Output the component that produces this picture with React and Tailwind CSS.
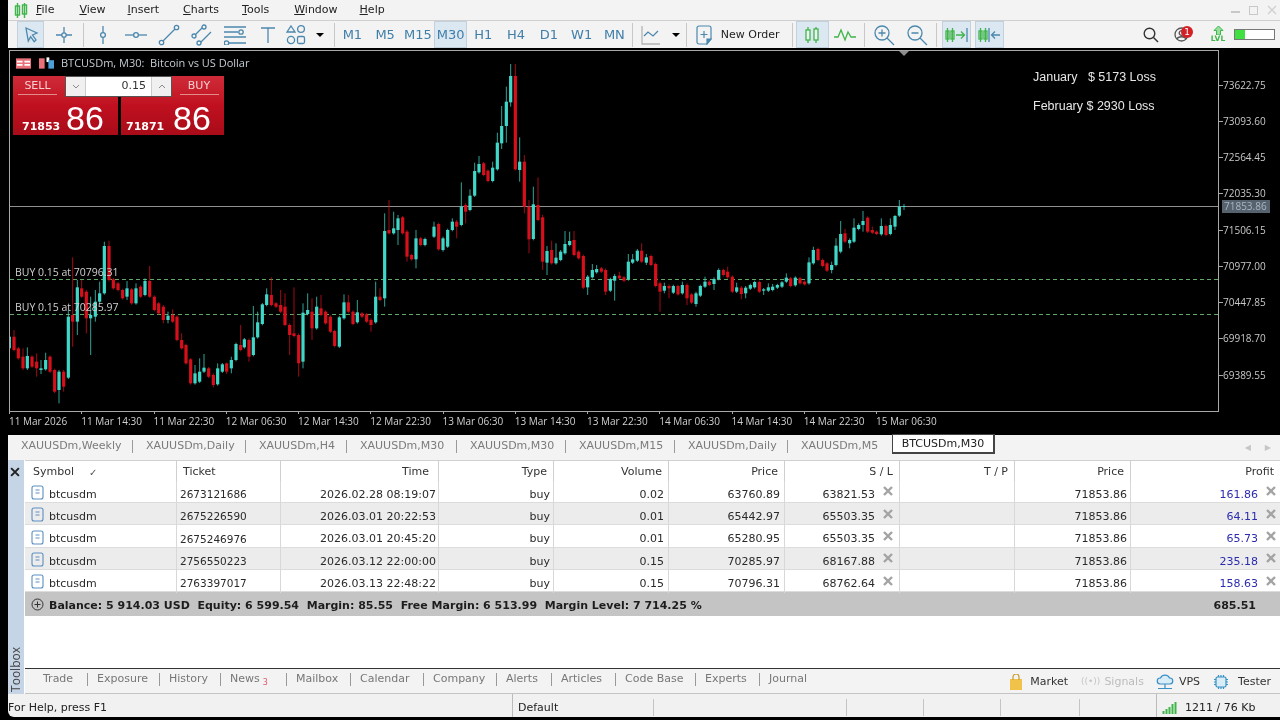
import React from "react";

const T = "#3fd8c8", R = "#d60f1b";
const z4 = [[28,"t",410,445],[42,"r",410,450,390],[55,"r",445,475],[69,"r",470,505,445,510],[82,"t",468,505,442,510],[96,"r",470,500],[110,"r",485,505,460,530],[123,"t",505,510,480,522],[137,"t",480,508,458],[150,"r",470,515],[164,"r",510,575],[177,"t",515,570,510,610],[191,"r",515,560,510,575],[205,"t",350,533,330],[218,"r",345,365,172,440],[232,"t",262,365,240,405],[245,"r",265,290,240],[259,"r",275,355,270,400],[272,"t",345,355,290,465],[286,"t",305,350,270,365],[299,"t",280,305,245],[313,"t",138,280,125],[327,"r",138,240,122],[340,"r",238,265],[354,"r",250,270],[368,"r",270,295],[381,"t",265,290,243,300],[395,"r",268,310],[408,"t",265,310,250],[422,"r",260,290],[435,"t",243,285,235],[449,"r",243,290,198],[463,"r",290,330],[476,"r",310,340],[490,"r",320,360,315,370],[504,"t",347,360,335,370],[518,"r",345,365,328],[531,"r",350,420],[545,"r",420,445,400],[558,"r",435,490],[572,"r",478,550],[585,"t",520,550,495],[599,"t",515,545,475],[612,"t",503,515,462],[626,"r",505,530],[640,"r",525,555,520,562],[653,"t",505,553,490],[667,"t",493,515],[680,"r",490,515,488,522],[694,"t",480,505,470,520],[708,"t",432,480,428],[722,"r",435,450,375],[733,"t",418,442],[747,"r",420,470,415,485],[760,"t",412,465,318],[773,"t",367,412,335],[787,"t",313,372],[800,"t",283,315,265],[814,"r",285,315,232],[828,"r",310,320],[842,"r",315,335,270],[855,"r",320,375,280],[869,"r",375,405,370,465],[882,"r",400,408,262],[896,"r",405,490,400,530],[909,"t",338,485,310,505],[923,"t",330,342,280],[936,"r",335,385,295,420],[950,"t",320,385,290],[963,"r",325,345,285],[977,"r",335,370],[991,"r",350,395],[1004,"r",393,438],[1018,"t",352,440],[1032,"t",307,355,283],[1045,"r",307,335,285],[1059,"r",335,372],[1072,"t",337,367,300],[1086,"r",340,350],[1100,"r",343,365],[1113,"r",360,375,355,395],[1127,"t",290,367,245],[1140,"r",290,300,265],[1154,"t",93,295,40,320],[1167,"r",90,100,0],[1181,"t",85,100,35],[1194,"t",55,90,45,135],[1208,"r",52,100],[1221,"r",95,170,90,185],[1235,"r",165,178],[1248,"t",115,178,90,205],[1262,"r",115,135],[1275,"t",117,135]];
const z5 = [[12,"t",530,560,515],[26,"r",522,598],[39,"t",565,600,560,605],[53,"t",540,590],[67,"t",515,540,505],[80,"r",515,530,510,565],[94,"t",470,525,397],[107,"r",465,485,460,520],[120,"t",437,480,418],[134,"t",363,437,338],[147,"t",342,367,318],[161,"r",340,375],[174,"r",362,393],[188,"t",353,393,335],[202,"t",278,358,248],[215,"t",228,280,168,297],[229,"t",155,228,110,278],[242,"t",78,157,42,170],[256,"r",78,358,42],[269,"t",335,360,262,395],[283,"r",335,470,315,490],[297,"r",470,568,450,610],[310,"t",463,567,410],[324,"r",465,510,382],[338,"r",502,635,495,660],[351,"t",603,638,588,675],[365,"r",600,640,572],[378,"t",623,640,580],[392,"t",605,630,600],[405,"t",582,610,543],[419,"t",573,585,545],[432,"r",570,615,543],[446,"r",605,625],[460,"r",618,713],[473,"t",680,712,675,735],[487,"t",660,682,642],[500,"t",657,667,645],[514,"r",655,665],[527,"r",660,725,655,735],[541,"t",687,722],[554,"t",678,692,672,752],[568,"r",677,685,665],[582,"r",682,692,678,697],[595,"t",635,688,612],[608,"t",628,638,612],[622,"t",602,632,597],[635,"r",602,635,580],[649,"t",622,638,612,645],[663,"r",618,645],[677,"r",642,708],[690,"r",700,725,695,785],[703,"t",708,722,698,730],[717,"r",708,715,703,745],[730,"t",708,728],[744,"r",708,733],[757,"t",705,730,695],[771,"r",705,745,700,765],[785,"r",733,758],[798,"t",730,762,725,770],[811,"t",708,737],[825,"t",695,710,680],[838,"r",695,705],[852,"t",687,702,682,720],[866,"t",660,687,655],[880,"r",660,675],[893,"r",665,682,650],[907,"r",680,725],[920,"t",712,725,698],[934,"r",713,732,708,748],[947,"t",713,730,708,745],[961,"t",705,716],[974,"t",696,712],[988,"r",696,725],[1001,"t",718,722,714,735],[1015,"t",712,722,700],[1028,"t",710,720,702],[1042,"t",705,713],[1056,"t",697,710],[1069,"t",683,695,670],[1082,"r",685,708],[1096,"t",683,706],[1110,"r",685,700],[1124,"r",695,703],[1137,"t",637,700,622],[1150,"t",600,640,590],[1164,"r",597,630],[1178,"r",630,648],[1191,"r",640,662],[1205,"t",645,660,635,670],[1218,"t",587,645,565],[1232,"t",552,605,513,610],[1245,"r",550,575,537],[1259,"t",570,580,565,595],[1272,"t",533,575,505],[1286,"t",525,537,520],[1299,"t",513,525,483,545],[1313,"r",503,545],[1327,"r",540,548,530],[1340,"r",545,552],[1354,"t",528,553,505],[1368,"r",528,555],[1381,"t",525,552,505],[1395,"t",498,530,495,540],[1408,"t",470,497,450],[1422,"t",468,470,462,480]];

const candles = [
  ...z4.map(([x, c, bt, bb, wt, wb]) => ({ x: x / 3, c, bt: 200 + bt / 3, bb: 200 + bb / 3, wt: 200 + (wt ?? bt - 4) / 3, wb: 200 + (wb ?? bb + 4) / 3 })),
  ...z5.map(([x, c, bt, bb, wt, wb]) => ({ x: 430 + x / 3, c, bt: 50 + bt / 3, bb: 50 + bb / 3, wt: 50 + (wt ?? bt - 4) / 3, wb: 50 + (wb ?? bb + 4) / 3 })),
];

function Candles() {
  return (
    <svg className="absolute left-0 top-0 w-[1208px] h-[360px]" viewBox="10 51 1208 360">
      <line x1="10" x2="1218" y1="206.5" y2="206.5" stroke="#8f8f8f" strokeWidth="1" />
      <line x1="10" x2="1218" y1="279.5" y2="279.5" stroke="#62a866" strokeWidth="1" strokeDasharray="4 3" />
      <line x1="10" x2="1218" y1="314.5" y2="314.5" stroke="#62a866" strokeWidth="1" strokeDasharray="4 3" />
      <polygon points="899,51 909,51 904,56" fill="#8c8c8c" />
      {candles.map((k, i) => {
        const col = k.c === "t" ? T : R;
        return (
          <g key={i}>
            <rect x={k.x - 0.5} y={k.wt} width="1" height={k.wb - k.wt} fill={col} opacity="0.75" />
            <rect x={k.x - 1.6} y={k.bt} width="3.2" height={Math.max(k.bb - k.bt, 1)} fill={col} />
          </g>
        );
      })}
    </svg>
  );
}

const Ic = ({ w = 20, h = 20, vb = "0 0 20 20", children, stroke = "#4c88ad", sw = 1.3 }) => (
  <svg width={w} height={h} viewBox={vb} fill="none" stroke={stroke} strokeWidth={sw}>{children}</svg>
);
const Btn = ({ children, active, cls = "w-[33px]" }) => (
  <div className={`${cls} h-[27px] shrink-0 flex items-center justify-center ${active ? "bg-[#dbe7f1] border border-[#c3d1dd]" : ""}`}>{children}</div>
);
const Sep = ({ cls = "w-[6px]" }) => (
  <div className={`${cls} h-[24px] shrink-0 flex justify-center`}><div className="w-px h-full bg-[#c8c8c8]" /></div>
);
const Caret = () => <div className="w-0 h-0 border-l-[4px] border-r-[4px] border-t-[4px] border-l-transparent border-r-transparent border-t-black" />;

const TwoCandles = () => (
  <Ic w={16} h={18} vb="0 0 16 18" stroke="#3fb54a"><path d="M4 1v16M12 1v16" /><rect x="2" y="4" width="4" height="10" fill="#eef3f7" /><rect x="10" y="3" width="4" height="11" fill="#eef3f7" /></Ic>
);

const tfs = ["M1", "M5", "M15", "M30", "H1", "H4", "D1", "W1", "MN"];

function Toolbar() {
  return (
    <div className="h-[28px] bg-[#f3f3f3] border-t border-[#cfcfcf] flex items-center pl-[6px] text-[#3f7ea9] text-[13px]">
      <Btn active cls="w-[27px] mx-[3px]"><Ic vb="0 0 20 20"><path d="M5 3l11 5-4.5 2L15 15l-1.8 1.7-3.6-5-2.3 4.3z" /></Ic></Btn>
      <Btn><Ic><path d="M10 2v16M2 10h16" /><circle cx="10" cy="10" r="2.2" fill="#f3f3f3" /></Ic></Btn>
      <Sep />
      <Btn><Ic><path d="M10 1v18" /><circle cx="10" cy="10" r="2.4" fill="#f3f3f3" /></Ic></Btn>
      <Btn><Ic w={22} vb="0 0 22 20"><path d="M0 10h22" /><circle cx="11" cy="10" r="2.4" fill="#f3f3f3" /></Ic></Btn>
      <Btn><Ic w={22} h={22} vb="0 0 22 22"><path d="M3 19L19 3" /><circle cx="3.5" cy="18.5" r="2.2" fill="#f3f3f3" /><circle cx="18.5" cy="3.5" r="2.2" fill="#f3f3f3" /></Ic></Btn>
      <Btn><Ic w={22} h={22} vb="0 0 22 22"><path d="M2 13L13 2M8 20L20 8" /><circle cx="13" cy="3" r="2" fill="#f3f3f3" /><circle cx="3" cy="12" r="2" fill="#f3f3f3" /><circle cx="8" cy="19" r="2" fill="#f3f3f3" /></Ic></Btn>
      <Btn><Ic w={22} h={20} vb="0 0 22 20"><path d="M0 2h22M0 7h14M0 12h22M5 18h17" /><circle cx="17" cy="7" r="2.2" fill="#f3f3f3" /><circle cx="2.5" cy="18" r="2.2" fill="#f3f3f3" /></Ic></Btn>
      <Btn><Ic w={16} h={18} vb="0 0 16 18"><path d="M1 2h14M8 2v15" /></Ic></Btn>
      <Btn cls="w-[24px]"><Ic w={22} h={22} vb="0 0 22 22"><path d="M6 2l4 6H2z" /><circle cx="16" cy="5" r="3.4" /><circle cx="6" cy="16" r="3.6" /><rect x="12.5" y="12.5" width="7" height="7" rx="1.5" /></Ic></Btn>
      <Btn cls="w-[24px]"><Caret /></Btn>
      <Sep cls="w-[4px]" />
      {tfs.map((t) => (
        <Btn key={t} active={t === "M30"} cls="w-[32.75px]"><span>{t}</span></Btn>
      ))}
      <Sep cls="w-[4px]" />
      <Btn><Ic w={20} h={20} vb="0 0 20 20" stroke="#8aa0ad"><path d="M1 1v18h18" stroke="#b4b4b4" /><path d="M3 11l4-4 5 4 5-5" stroke="#4c88ad" /></Ic></Btn>
      <Btn cls="w-[16px]"><Caret /></Btn>
      <Sep />
      <Btn cls="w-[28px]"><Ic w={16} h={20} vb="0 0 16 20" sw={1.2}><path d="M3 1h10a2 2 0 012 2v11l-4 5H3a2 2 0 01-2-2V3a2 2 0 012-2z" /><path d="M8 6v7M4.5 9.500h7" /><path d="M11 19l4-5h-4z" fill="#4c88ad" /></Ic></Btn>
      <div className="w-[72px] shrink-0 pl-[3px] text-[#222] text-[11px] pt-[1px]">New Order</div>
      <Sep />
      <Btn active><TwoCandles /></Btn>
      <Btn><Ic w={22} h={16} vb="0 0 22 16" stroke="#3fb54a"><path d="M0 10h4l3-7 4 10 3-8 3 5h5" /></Ic></Btn>
      <Sep />
      <Btn><Ic w={22} h={22} vb="0 0 22 22"><circle cx="9" cy="9" r="7" /><path d="M14 14l7 7M9 5.500v7M5.500 9h7" /></Ic></Btn>
      <Btn><Ic w={22} h={22} vb="0 0 22 22"><circle cx="9" cy="9" r="7" /><path d="M14 14l7 7M5.500 9h7" /></Ic></Btn>
      <Sep />
      <Btn active cls="w-[29px] mx-[2px]"><div className="flex items-center"><Ic w={10} h={16} vb="0 0 10 16" stroke="#3fb54a"><path d="M2.500 1v14M7.500 1v14" /><rect x="1" y="4" width="3" height="8" /><rect x="6" y="4" width="3" height="8" /></Ic><Ic w={13} h={16} vb="0 0 13 16" stroke="#3fb54a"><path d="M1 8h8M6 4.500L9.500 8 6 11.500" /><path d="M12 1v14" stroke="#4c88ad" /></Ic></div></Btn>
      <Btn active cls="w-[29px] mx-[2px]"><div className="flex items-center"><Ic w={10} h={16} vb="0 0 10 16" stroke="#3fb54a"><path d="M2.500 1v14M7.500 1v14" /><rect x="1" y="4" width="3" height="8" /><rect x="6" y="4" width="3" height="8" /></Ic><Ic w={13} h={16} vb="0 0 13 16"><path d="M1 1v14M12 8H4M7 4.500L3.500 8 7 11.500" /></Ic></div></Btn>
      <div className="ml-auto flex items-center pr-[5px]">
        <div className="w-[30px] flex justify-center"><Ic w={16} h={16} vb="0 0 16 16" stroke="#333" sw={1.4}><circle cx="6.500" cy="6.500" r="5.300" /><path d="M10.500 10.500L15 15" /></Ic></div>
        <div className="w-[30px] flex justify-center relative">
          <Ic w={15} h={15} vb="0 0 15 15" stroke="#555"><circle cx="7.500" cy="7.500" r="6.500" /><circle cx="7.500" cy="6" r="2.300" /><path d="M3 12c1-3 8-3 9 0" /></Ic>
          <div className="absolute left-[15px] -top-[1px] w-[12px] h-[12px] rounded-full bg-[#d32027] text-white text-[9px] leading-[12px] text-center">1</div>
        </div>
        <div className="w-[30px] ml-[7px] flex flex-col items-center text-[#3fb54a] text-[7.500px] leading-[8px] font-bold">
          <svg width="11" height="9" viewBox="0 0 11 9" fill="#9adf9f" stroke="#3fb54a"><path d="M5.500 0L10 4.500H7.500V9h-4V4.500H1z" /></svg>
          <span>LVL</span>
        </div>
        <div className="w-[41px] h-[11px] ml-px border border-[#777] bg-white flex"><div className="w-[10px] bg-[#3fe03f]" /></div>
      </div>
    </div>
  );
}

function MenuBar() {
  const items = [["F", "ile", "ml-[28px]"], ["V", "iew", "ml-[25px]"], ["I", "nsert", "ml-[22px]"], ["C", "harts", "ml-[24px]"], ["T", "ools", "ml-[23px]"], ["W", "indow", "ml-[25px]"], ["H", "elp", "ml-[22px]"]];
  return (
    <div className="h-[20px] bg-[#f3f3f3] flex items-center relative text-[11px] text-[#222]">
      <div className="absolute left-[6px] top-[3px]">
        <Ic w={14} h={15} vb="0 0 14 15" stroke="#3fb54a" sw={1.4}><path d="M3.500 0v15M10.500 0v15" /><rect x="1.500" y="3" width="4" height="9" /><rect x="8.500" y="2" width="4" height="9" /></Ic>
      </div>
      {items.map(([a, b, c]) => (
        <span key={a} className={c}><span className="underline">{a}</span>{b}</span>
      ))}
      <div className="ml-auto flex items-center gap-[9px] pr-[3px] text-[#c8c8c8]">
        <div className="w-[9px] h-[2px] mt-[4px] bg-[#c8c8c8]" />
        <div className="w-[9px] h-[9px] border border-[#c8c8c8]" />
        <svg width="10" height="10" viewBox="0 0 10 10" stroke="#d0d0d0" strokeWidth="1.300"><path d="M1 1l8 8M9 1l-8 8" /></svg>
      </div>
    </div>
  );
}

const Chev = ({ d }) => (
  <svg width="8" height="5" viewBox="0 0 8 5" fill="none" stroke="#8a8a8a" strokeWidth="1"><path d={d} /></svg>
);

function TradePanel() {
  const red = "bg-gradient-to-b from-[#cf2a38] via-[#c01020] to-[#a80c18]";
  return (
    <div className="absolute left-[3px] top-[25px] flex gap-[3px] font-['DejaVu_Sans',sans-serif]">
      <div className={`w-[105px] h-[59px] ${red} text-white`}>
        <div className="w-[49px] h-[21px] flex items-center justify-center text-[11px] text-[#f3cfcf]"><span className="border-b border-[#e38a8a] w-[39px] text-center">SELL</span></div>
        <div className="flex items-baseline pl-[9px] pt-[3px] h-[38px]"><span className="font-bold w-[44px] text-[11px]">71853</span><span className="text-[34px] leading-[36px] font-['Liberation_Sans',sans-serif]">86</span></div>
      </div>
      <div className={`w-[103px] h-[59px] ${red} text-white`}>
        <div className="w-[50px] h-[21px] ml-[53px] flex items-center justify-center text-[11px] text-[#f3cfcf]"><span className="border-b border-[#e38a8a] w-[39px] text-center">BUY</span></div>
        <div className="flex items-baseline pl-[5px] pt-[3px] h-[38px]"><span className="font-bold w-[47px] text-[11px]">71871</span><span className="text-[34px] leading-[36px] font-['Liberation_Sans',sans-serif]">86</span></div>
      </div>
      <div className="absolute left-[52px] top-0 w-[107px] h-[21px] bg-white border border-[#555] flex items-center text-[11px] text-[#333]">
        <div className="w-[20px] h-full bg-[#f0f0f0] border-r border-[#ccc] flex items-center justify-center"><Chev d="M1 1l3 3 3-3" /></div>
        <div className="flex-1 text-right pr-[5px]">0.15</div>
        <div className="w-[20px] h-full bg-[#f0f0f0] border-l border-[#ccc] flex items-center justify-center"><Chev d="M1 4l3-3 3 3" /></div>
      </div>
    </div>
  );
}

const prices = ["73622.75", "73093.60", "72564.45", "72035.30", "71506.15", "70977.00", "70447.85", "69918.70", "69389.55"];
const times = ["11 Mar 2026", "11 Mar 14:30", "11 Mar 22:30", "12 Mar 06:30", "12 Mar 14:30", "12 Mar 22:30", "13 Mar 06:30", "13 Mar 14:30", "13 Mar 22:30", "14 Mar 06:30", "14 Mar 14:30", "14 Mar 22:30", "15 Mar 06:30"];

function Chart() {
  return (
    <div className="h-[385px] mt-[2px] bg-black">
      <div className="flex h-[362px]">
        <div className="relative ml-px w-[1210px] h-[362px] border border-[#a8a8a8] font-['Open_Sans',sans-serif] text-[#d0d0d0] overflow-hidden">
          <Candles />
          <div className="absolute left-[6px] top-[4px] flex items-center gap-[8px] text-[11px] text-[#c4ccd2]">
            <svg width="15" height="11" viewBox="0 0 16 11"><rect width="16" height="11" fill="#e8717a" /><path d="M1 3.500h6M9 3.500h6M1 7h6M9 7h6" stroke="#fff" strokeWidth="2" /></svg>
            <svg width="15" height="12" viewBox="0 0 16 12"><rect x="0" y="1" width="6" height="11" fill="#e8717a" /><rect x="8" y="0" width="3" height="5" fill="#fff" /><rect x="10" y="3" width="6" height="9" fill="#4c9fd8" /></svg>
            <span className="whitespace-pre -ml-px">BTCUSDm, M30:  Bitcoin vs US Dollar</span>
          </div>
          <TradePanel />
          <div className="absolute left-[5px] top-[214px] text-[10.500px] leading-[14px]">BUY 0.15 at 70796.31</div>
          <div className="absolute left-[5px] top-[249px] text-[10.500px] leading-[14px]">BUY 0.15 at 70285.97</div>
          <div className="absolute left-[1023px] top-[18px] text-[12.500px] leading-[16px] whitespace-pre font-['Liberation_Sans',sans-serif] text-[#e6e6e6]">January   $ 5173 Loss</div>
          <div className="absolute left-[1023px] top-[47px] text-[12.500px] leading-[16px] whitespace-pre font-['Liberation_Sans',sans-serif] text-[#e6e6e6]">February $ 2930 Loss</div>
        </div>
        <div className="relative flex-1 pt-[17px] font-['Open_Sans',sans-serif] text-[10px] text-[#c8c8c8]">
          {prices.map((p) => (
            <div key={p} className="h-[36.280px] flex items-center">
              <div className="w-[4px] h-px bg-[#a8a8a8]" />
              <span>{p}</span>
            </div>
          ))}
          <div className="absolute left-[3px] top-[150px] w-[48px] h-[13px] bg-[#56626e] text-[#a9b8c4] leading-[13px] pl-[2px]">71853.86</div>
        </div>
      </div>
      <div className="flex ml-[1px] font-['Open_Sans',sans-serif] text-[10px] text-[#d0d0d0]">
        {times.map((t) => (
          <div key={t} className="w-[72.250px] shrink-0 relative h-[23px] pt-[2px] whitespace-nowrap">
            <div className="absolute left-0 -top-px w-px h-[3px] bg-[#a8a8a8]" />
            {t}
          </div>
        ))}
      </div>
    </div>
  );
}

function ChartTabs() {
  const tabs = [["XAUUSDm,Weekly", "w-[125px]"], ["XAUUSDm,Daily", "w-[113px]"], ["XAUUSDm,H4", "w-[101px]"], ["XAUUSDm,M30", "w-[110px]"], ["XAUUSDm,M30", "w-[109px]"], ["XAUUSDm,M15", "w-[109px]"], ["XAUUSDm,Daily", "w-[113px]"], ["XAUUSDm,M5", "w-[91px]"]];
  return (
    <div className="h-[25px] bg-[#f3f3f3] flex items-start text-[#7b7b7b] pl-[13px]">
      {tabs.map(([t, w], i) => (
        <div key={i} className={`${w} h-[20px] mt-[1px] flex items-center shrink-0`}>
          <span className="flex-1 whitespace-nowrap">{t}</span>
          {i < 7 && <div className="w-px h-[13px] bg-[#9a9a9a] mr-[13px]" />}
        </div>
      ))}
      <div className="w-[103px] h-[20px] -mt-px pt-[2px] bg-white border border-[#444] border-b-2 border-r-2 text-[#222] flex items-center justify-center">BTCUSDm,M30</div>
      <div className="ml-auto mt-[7px] flex gap-[14px] pr-[9px] text-[#c6c6c6] text-[8px]"><span>◀</span><span>▶</span></div>
    </div>
  );
}

const rows = [
  ["2673121686", "2026.02.28 08:19:07", "0.02", "63760.89", "63821.53", "161.86"],
  ["2675226590", "2026.03.01 20:22:53", "0.01", "65442.97", "65503.35", "64.11"],
  ["2675246976", "2026.03.01 20:45:20", "0.01", "65280.95", "65503.35", "65.73"],
  ["2756550223", "2026.03.12 22:00:00", "0.15", "70285.97", "68167.88", "235.18"],
  ["2763397017", "2026.03.13 22:48:22", "0.15", "70796.31", "68762.64", "158.63"],
];
const gridCols = "grid grid-cols-[152px_104px_158px_115px_115px_116px_115px_115px_116px_149px]";
const XMark = () => (
  <svg width="10" height="10" viewBox="0 0 10 10" stroke="#a3a3a3" strokeWidth="2.400" className="shrink-0 -mt-[7px]"><path d="M1 1l8 8M9 1l-8 8" /></svg>
);
const DocIcon = () => (
  <svg width="13" height="15" viewBox="0 0 13 15" fill="none" stroke="#5b8fc0" strokeWidth="1.100" className="-mt-[5px]"><rect x="1" y="1" width="11" height="13" rx="2" /><path d="M4.500 5h4M4.500 8h4" /></svg>
);

function Table() {
  const hc = "h-[20px] flex items-center border-r border-[#cfcfcf] px-[6px] pt-[2px]";
  const c = "h-full flex items-center border-r border-[#d8d8d8] pt-[6px]";
  return (
    <div className="flex-1 bg-white text-[#2a2a2a] overflow-hidden">
      <div className={`${gridCols} h-[20.500px] border-t border-[#d0d0d0] text-[#333]`}>
        <div className={`${hc} pl-[8px]`}>Symbol<span className="ml-[15px] text-[10px] text-[#555]">✓</span></div>
        <div className={hc}>Ticket</div>
        <div className={`${hc} justify-end pr-[9px]`}>Time</div>
        <div className={`${hc} justify-end`}>Type</div>
        <div className={`${hc} justify-end`}>Volume</div>
        <div className={`${hc} justify-end`}>Price</div>
        <div className={`${hc} justify-end`}>S / L</div>
        <div className={`${hc} justify-end`}>T / P</div>
        <div className={`${hc} justify-end`}>Price</div>
        <div className="h-[20px] flex items-center justify-end pr-[6px] pt-[2px]">Profit</div>
      </div>
      {rows.map((r, i) => (
        <div key={r[0]} className={`${gridCols} h-[22.400px] border-b border-[#dcdcdc] ${i % 2 ? "bg-[#ececec]" : "bg-white"}`}>
          <div className={`${c} pl-[6px] gap-[5px]`}><DocIcon />btcusdm</div>
          <div className={`${c} pl-[3px] text-[10.500px]`}>{r[0]}</div>
          <div className={`${c} justify-end pr-[2px]`}>{r[1]}</div>
          <div className={`${c} justify-end pr-[3px]`}>buy</div>
          <div className={`${c} justify-end pr-[4px]`}>{r[2]}</div>
          <div className={`${c} justify-end pr-[4px]`}>{r[3]}</div>
          <div className={`${c} justify-end pr-[6px] gap-[8px]`}>{r[4]}<XMark /></div>
          <div className={c} />
          <div className={`${c} justify-end pr-[3px]`}>71853.86</div>
          <div className="h-full flex items-center justify-end pr-[4px] pt-[6px] gap-[8px] text-[#2b2bb0]">{r[5]}<XMark /></div>
        </div>
      ))}
      <div className="h-[23.500px] bg-[#c4c4c4] flex items-center pl-[6px] pr-[24px] pt-[5px] text-[11px] font-bold text-[#1d1d1d]">
        <svg width="13" height="13" viewBox="0 0 13 13" fill="none" stroke="#333" strokeWidth="1" className="mr-[5px] -mt-[4px]"><circle cx="6.500" cy="6.500" r="5.500" /><path d="M6.500 3.500v6M3.500 6.500h6" /></svg>
        <span className="whitespace-pre">Balance: 5 914.03 USD  Equity: 6 599.54  Margin: 85.55  Free Margin: 6 513.99  Margin Level: 7 714.25 %</span>
        <span className="ml-auto">685.51</span>
      </div>
    </div>
  );
}

function BottomTabs() {
  const tabs = [["Trade", "w-[54px]"], ["Exposure", "w-[72px]"], ["History", "w-[61px]"], ["News", "w-[66px]"], ["Mailbox", "w-[64px]"], ["Calendar", "w-[73px]"], ["Company", "w-[73px]"], ["Alerts", "w-[55px]"], ["Articles", "w-[64px]"], ["Code Base", "w-[80px]"], ["Experts", "w-[64px]"], ["Journal", "w-[60px]"]];
  return (
    <div className="h-[26px] bg-[#f3f3f3] border-t border-[#333] border-b border-b-[#c4c4c4] flex items-center pl-[18px] text-[#777]">
      {tabs.map(([t, w], i) => (
        <div key={t} className={`${w} flex items-center shrink-0 pb-[3px]`}>
          <span>{t}</span>
          {t === "News" && <span className="text-[8px] text-[#e0556f] ml-[3px] mt-[6px]">3</span>}
          {i < 11 && <div className="ml-auto mr-[9px] w-px h-[13px] bg-[#999]" />}
        </div>
      ))}
      <div className="ml-auto flex items-center text-[#333] pr-[9px] pt-[2px]">
        <svg width="14" height="16" viewBox="0 0 14 16"><path d="M1 5h12v11H1z" fill="#f0c24a" /><path d="M4 6V3a3 3 0 016 0v3" fill="none" stroke="#c99a2a" strokeWidth="1.200" /></svg>
        <span className="ml-[7px]">Market</span>
        <span className="ml-[13px] text-[#c4c4c4] text-[9px]">((•))</span>
        <span className="ml-[4px] text-[#bcbcbc]">Signals</span>
        <svg width="20" height="17" viewBox="0 0 20 17" fill="none" stroke="#3a8fc4" strokeWidth="1.200" className="ml-[11px]"><path d="M5 10a3 3 0 01.500-6 5 5 0 019 0 3 3 0 01.500 6z" fill="#d8edf8" /><path d="M10 10v4M3 14.500h14" /></svg>
        <span className="ml-[4px]">VPS</span>
        <svg width="16" height="16" viewBox="0 0 16 16" fill="#d8edf8" stroke="#3a8fc4" strokeWidth="1.200" className="ml-[13px]"><rect x="3" y="3" width="10" height="10" rx="1.500" /><path d="M1 5.500h2M1 8h2M1 10.500h2M13 5.500h2M13 8h2M13 10.500h2M5.500 1v2M8 1v2M10.500 1v2M5.500 13v2M8 13v2M10.500 13v2" /></svg>
        <span className="ml-[9px]">Tester</span>
      </div>
    </div>
  );
}

function StatusBar() {
  const sep = "h-[17px] shrink-0 border-l border-[#c4c4c4] mt-[3px]";
  return (
    <div className="h-[23px] bg-[#f1f1f1] flex items-center text-[#222] rounded-bl-[6px]">
      <div className="w-[504px] shrink-0 pt-[5px]">For Help, press F1</div>
      <div className="w-[141px] h-full shrink-0 border-l border-[#bbb] pl-[5px] pt-[5px] flex items-center">Default</div>
      <div className={`w-[193px] ${sep}`} />
      <div className={`w-[77px] ${sep}`} />
      <div className={`w-[77px] ${sep}`} />
      <div className={`w-[79px] ${sep}`} />
      <div className={`w-[77px] ${sep}`} />
      <div className="h-full flex-1 border-l border-[#bbb] pl-[5px] pt-[5px] flex items-center gap-[7px]">
        <svg width="16" height="12" viewBox="0 0 15 12" fill="#3fb54a"><rect x="0" y="9" width="2" height="3" /><rect x="3" y="7" width="2" height="5" /><rect x="6" y="5" width="2" height="7" /><rect x="9" y="2" width="2" height="10" /><rect x="12" y="0" width="2" height="12" /></svg>
        1211 / 76 Kb
      </div>
    </div>
  );
}

export default function App() {
  return (
    <div className="w-[1280px] h-[720px] bg-black overflow-hidden pl-[8px] pb-[3px] flex flex-col text-[11px] font-['DejaVu_Sans',sans-serif] [filter:blur(0.4px)]">
      <MenuBar />
      <Toolbar />
      <Chart />
      <ChartTabs />
      <div className="flex h-[234px] bg-white">
        <div className="w-[16px] bg-[#c6d5e5] shrink-0 flex flex-col items-center justify-between mr-px">
          <svg width="10" height="10" viewBox="0 0 9 9" stroke="#222" strokeWidth="1.800" className="mt-[7px] -ml-[2px]"><path d="M1 1l7 7M8 1L1 8" /></svg>
          <span className="[writing-mode:vertical-rl] rotate-180 text-[#444] mb-[2px] text-[12px] font-['Open_Sans',sans-serif]">Toolbox</span>
        </div>
        <div className="flex-1 min-w-0 flex flex-col">
          <Table />
          <BottomTabs />
        </div>
      </div>
      <StatusBar />
    </div>
  );
}
